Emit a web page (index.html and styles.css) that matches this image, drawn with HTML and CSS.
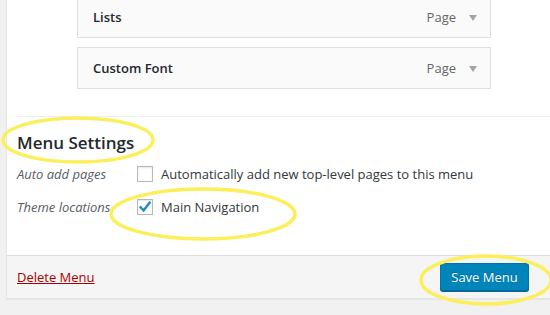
FILE: index.html
```html
<!DOCTYPE html>
<html>
<head>
<meta charset="utf-8">
<link rel="stylesheet" href="styles.css">
</head>
<body>
<div class="panel">
  <div class="body">
    <ul class="items">
      <li class="item"><span class="title">Lists</span><span class="type">Page</span><span class="arrow"></span></li>
      <li class="item"><span class="title">Custom Font</span><span class="type">Page</span><span class="arrow"></span></li>
    </ul>
    <div class="settings">
      <h3 class="heading">Menu Settings</h3>
      <div class="row">
        <span class="label">Auto add pages</span>
        <span class="check"></span>
        <span class="text">Automatically add new top-level pages to this menu</span>
      </div>
      <div class="row">
        <span class="label">Theme locations</span>
        <span class="check checked">
          <svg viewBox="0 0 16 16" width="16" height="16"><path d="M3.6 8.2 L6.6 11.4 L12.6 3.6" fill="none" stroke="#1e8cbe" stroke-width="2.4" stroke-linecap="square"/></svg>
        </span>
        <span class="text">Main Navigation</span>
      </div>
    </div>
  </div>
  <div class="footer">
    <a class="delete" href="#">Delete Menu</a>
    <button class="save">Save Menu</button>
  </div>
</div>
<svg class="marks" width="550" height="315" viewBox="0 0 550 315">
  <ellipse cx="78" cy="140" rx="75" ry="22" fill="none" stroke="#fbef5a" stroke-width="3.5"/>
  <ellipse cx="203" cy="214" rx="92" ry="25" fill="none" stroke="#fbef5a" stroke-width="3.5"/>
  <ellipse cx="486" cy="280" rx="65" ry="24" fill="none" stroke="#fbef5a" stroke-width="3.5"/>
</svg>
</body>
</html>
```
FILE: styles.css
```css
html, body {
  margin: 0;
  padding: 0;
  background: #f1f1f1;
  overflow: hidden;
  width: 550px;
  height: 315px;
  font-family: "Open Sans", "Liberation Sans", sans-serif;
  font-size: 13px;
  color: #23282d;
}
.panel {
  margin-left: 6px;
  width: 560px;
  border-left: 1px solid #e5e5e5;
  border-bottom: 1px solid #e5e5e5;
  box-shadow: 0 1px 1px rgba(0,0,0,.04);
  background: #fff;
}
.body {
  padding: 0 0 0 10px;
  height: 255px;
  overflow: hidden;
}
.items {
  list-style: none;
  margin: -4px 0 0 60px;
  padding: 0;
  width: 414px;
}
.item {
  box-sizing: border-box;
  height: 42px;
  border: 1px solid #dfdfdf;
  background: #fafafa;
  display: flex;
  align-items: center;
  padding: 0 13px 0 15px;
  margin-bottom: 9px;
}
.item:last-child {
  margin-bottom: 0;
}
.title {
  font-weight: 600;
  flex: 1;
}
.type {
  color: #666;
  margin-right: 13px;
}
.arrow {
  width: 0;
  height: 0;
  border-left: 4px solid transparent;
  border-right: 4px solid transparent;
  border-top: 6px solid #a0a5aa;
  margin-top: 2px;
}
.settings {
  margin-top: 27px;
  border-top: 1px solid #eee;
}
.heading {
  margin: 0;
  padding-top: 14px;
  font-size: 17px;
  font-weight: 600;
  line-height: 24px;
  color: #23282d;
}
.row {
  display: flex;
  align-items: center;
  height: 33px;
}
.label {
  width: 120px;
  font-style: italic;
  color: #555d66;
}
.check {
  box-sizing: border-box;
  width: 16px;
  height: 16px;
  border: 1px solid #b4b9be;
  background: #fff;
  box-shadow: inset 0 1px 2px rgba(0,0,0,.1);
  margin-right: 8px;
  display: flex;
  align-items: center;
  justify-content: center;
}
.check svg {
  display: block;
  margin: -1px;
}
.text {
  color: #32373c;
}
.settings .row:nth-of-type(1) {
  margin-top: 2px;
}
.footer {
  box-sizing: border-box;
  height: 43px;
  border-top: 1px solid #dddddd;
  background: #f5f5f5;
  display: flex;
  align-items: center;
  padding-left: 10px;
  width: 550px;
}
.delete {
  color: #a00;
  text-decoration: underline;
  flex: 1;
}
.save {
  box-sizing: border-box;
  width: 89px;
  height: 28px;
  margin-right: 28px;
  background: #0085ba;
  border: 1px solid #0073aa;
  border-bottom-color: #006799;
  border-radius: 3px;
  box-shadow: 0 1px 0 #006799;
  color: #fff;
  font-family: "Open Sans", "Liberation Sans", sans-serif;
  font-size: 13px;
  padding: 0;
  text-shadow: 0 -1px 1px #006799;
}
.marks {
  position: absolute;
  left: 0;
  top: 0;
  pointer-events: none;
}
```
